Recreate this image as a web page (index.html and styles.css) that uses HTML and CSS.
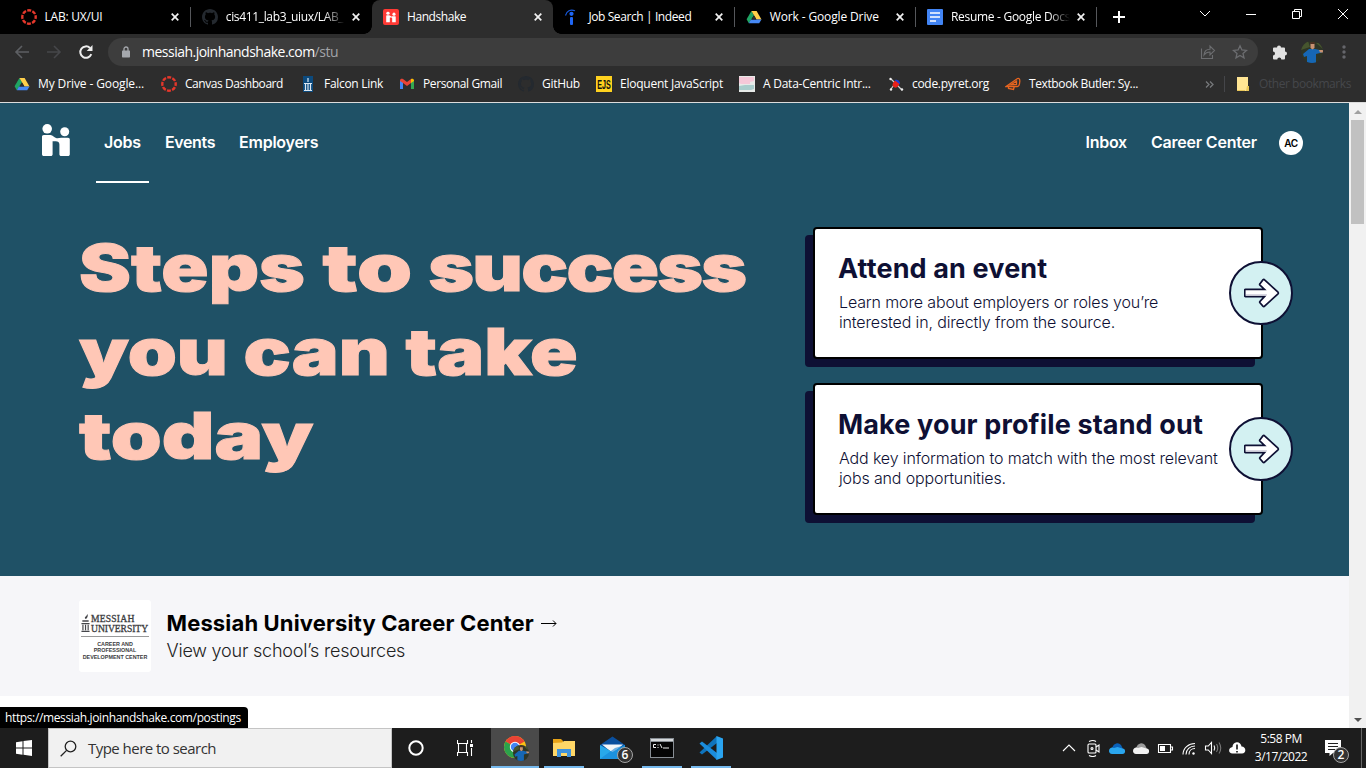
FILE: index.html
```html
<!DOCTYPE html>
<html lang="en">
<head>
<meta charset="utf-8">
<title>Handshake</title>
<link rel="stylesheet" href="styles.css">
</head>
<body>
<svg class="defs" aria-hidden="true">
  <defs>
    <clipPath id="pc"><circle cx="11" cy="11" r="11"/></clipPath>
    <symbol id="drive" viewBox="0 0 16 16"><path fill="#1fa463" d="M5.4 2 8 6.3 2.8 14.2.6 10.3z"/><path fill="#ffd04b" d="M5.4 2h5.2l4.9 8.6h-5z"/><path fill="#4688f4" d="M4.9 10.4h10.6l-2.3 3.8H2.8z"/><path fill="#2d2d2d" d="M8 6.4 10.4 10.4H5.6z"/></symbol>
    <symbol id="canvas" viewBox="0 0 16 16"><circle cx="8" cy="8" r="6.7" fill="none" stroke="#e4372b" stroke-width="2.4" stroke-dasharray="4 1.262" stroke-dashoffset="2"/></symbol>
    <symbol id="github" viewBox="0 0 16 16"><path fill="currentColor" d="M8 0C3.58 0 0 3.58 0 8c0 3.54 2.29 6.53 5.47 7.59.4.07.55-.17.55-.38 0-.19-.01-.82-.01-1.49-2.01.37-2.53-.49-2.69-.94-.09-.23-.48-.94-.82-1.13-.28-.15-.68-.52-.01-.53.63-.01 1.08.58 1.23.82.72 1.21 1.87.87 2.33.66.07-.52.28-.87.51-1.07-1.78-.2-3.64-.89-3.64-3.95 0-.87.31-1.59.82-2.15-.08-.2-.36-1.02.08-2.12 0 0 .67-.21 2.2.82.64-.18 1.32-.27 2-.27s1.36.09 2 .27c1.53-1.04 2.2-.82 2.2-.82.44 1.1.16 1.92.08 2.12.51.56.82 1.27.82 2.15 0 3.07-1.87 3.75-3.65 3.95.29.25.54.73.54 1.48 0 1.07-.01 1.93-.01 2.2 0 .21.15.46.55.38A8.01 8.01 0 0 0 16 8c0-4.42-3.58-8-8-8z"/></symbol>
    <symbol id="close" viewBox="0 0 8 8"><path d="M.7.7l6.6 6.6M7.3.7.7 7.3" fill="none" stroke="#f1f1f1" stroke-width="1.7"/></symbol>
    <symbol id="hands" viewBox="0 0 28 32"><circle cx="5.2" cy="4.8" r="4.8"/><circle cx="22.7" cy="7.7" r="4.5"/><path d="M1.800 11h6.700c2.400.3 3.700 2.700 6.200 3.200 1.400.3 3-.4 4.400-.4h6.900c1.100 0 1.800.7 1.800 1.800v14.600c0 1.100-.7 1.800-1.800 1.800h-6.800c-1.100 0-1.800-.7-1.800-1.800V20.400c0-2.200-1.400-3.200-3.600-3.200-1.300 0-2.300.2-3.200.1v12.900c0 1.100-.7 1.800-1.800 1.800H1.800C.7 32 0 31.300 0 30.200V12.800C0 11.700.7 11 1.800 11z"/></symbol>
    <symbol id="arrow" viewBox="0 0 36 30"><path d="M1.500 11.400h19l-4.500-4.300c-.5-.5-.5-.9 0-1.400l2.900-3.800c.6-.6 1.200-.6 1.700 0L34 14.200c.5.6.5 1 0 1.600L20.600 28.100c-.5.6-1.100.6-1.700 0L16 24.800c-.5-.5-.5-.9 0-1.400l4.500-4.800h-19c-.5 0-.8-.3-.8-.8v-5.600c0-.5.3-.8.8-.8z" fill="#fff" stroke="#0e1034" stroke-width="1.700"/><path d="M2 16.800h21" stroke="#d0cedd" stroke-width="1.200"/></symbol>
    <symbol id="person" viewBox="0 0 22 22"><g clip-path="url(#pc)"><path fill="#2e3526" d="M0 0h22v22H0z"/><path fill="#46552e" d="M0 0h7l2 6-9 3zM15 2h7v6z"/><path fill="#1667b4" d="M8 8h6l7 1.500v2L15 13v9H6v-7l-3 1-1-3z"/><path fill="#c89272" d="M9.500 2.500h4V7l-2 1.500L9.500 7zM18 9h4v2.500h-3z"/><path fill="#4b3023" d="M9.300 1h4.500v2H9.300z"/></g></symbol>
  </defs>
</svg>

<header class="tabs">
  <div class="tab"><svg class="fav"><use href="#canvas"/></svg><span class="label t-lab">LAB: UX/UI</span><svg class="x"><use href="#close"/></svg></div>
  <div class="tab"><svg class="fav octo"><use href="#github"/></svg><span class="label fade t-cis">cis411_lab3_uiux/LAB_</span><svg class="x"><use href="#close"/></svg></div>
  <div class="tab active"><svg class="fav" viewBox="0 0 16 16"><rect width="16" height="16" rx="2" fill="#ff3a35"/><use href="#hands" x="3" y="2.500" width="10" height="11" fill="#fff"/></svg><span class="label t-hand">Handshake</span><svg class="x"><use href="#close"/></svg></div>
  <div class="tab plain"><svg class="fav" viewBox="0 0 16 16"><path d="M1.500 6.500C2.500 2 6.500 0 11 1.800" fill="none" stroke="#1658d8" stroke-width="1.200"/><circle cx="7.500" cy="4.800" r="2.100" fill="#1f66f5"/><rect x="6" y="8" width="3" height="8" rx="1" fill="#1f66f5"/></svg><span class="label t-job">Job Search | Indeed</span><svg class="x"><use href="#close"/></svg></div>
  <div class="tab"><svg class="fav"><use href="#drive"/></svg><span class="label t-work">Work - Google Drive</span><svg class="x"><use href="#close"/></svg></div>
  <div class="tab"><svg class="fav" viewBox="0 0 16 16"><rect width="16" height="16" rx="1" fill="#4285f4"/><path d="M3 4h10M3 8h10M3 12h6" stroke="#fff" stroke-width="1.700"/></svg><span class="label fade t-res">Resume - Google Docs</span><svg class="x"><use href="#close"/></svg></div>
  <svg class="plus" viewBox="0 0 12 12"><path d="M6 0v12M0 6h12" stroke="#fff" stroke-width="2"/></svg>
  <div class="wincontrols">
    <svg viewBox="0 0 12 12"><path d="M1 3l5 5 5-5" /></svg>
    <svg viewBox="0 0 12 12"><path d="M1 6.500h10"/></svg>
    <svg viewBox="0 0 12 12"><path d="M1.500 3.500h7v7h-7zM3.500 3V1.500h7v7H9"/></svg>
    <svg viewBox="0 0 12 12"><path d="M1 1l10 10M11 1 1 11"/></svg>
  </div>
</header>

<div class="toolbar">
  <svg class="nav" viewBox="0 0 16 16"><path d="M15 8H2M8 2 2 8l6 6" fill="none" stroke="#5d5f63" stroke-width="1.600"/></svg>
  <svg class="nav" viewBox="0 0 16 16"><path d="M1 8h13M8 2l6 6-6 6" fill="none" stroke="#46474a" stroke-width="1.600"/></svg>
  <svg class="nav" viewBox="0 0 16 16"><path d="M13.300 10.200A5.700 5.700 0 1 1 12 4" fill="none" stroke="#eee" stroke-width="2"/><path d="M14.500 1v6H8.700z" fill="#eee"/></svg>
  <div class="omnibox">
    <svg class="lock" viewBox="0 0 8 12"><path d="M2 5V3a2 2 0 0 1 4 0v2" fill="none" stroke="#a5a8ad" stroke-width="1.300"/><rect y="4.500" width="8" height="7" rx=".7" fill="#a5a8ad"/></svg>
    <span class="url">messiah.joinhandshake.com<span class="path">/stu</span></span>
    <svg class="act" viewBox="0 0 16 16"><path d="M1.500 4.500v10h11V11M4 11c.3-4 3-5.800 6-5.800V2l4.500 4.500L10 11V8c-2.500 0-4.500.8-6 3z" fill="none" stroke="#6c6d70" stroke-width="1.100"/></svg>
    <svg class="act" viewBox="0 0 16 16"><path d="m8 1.800 1.900 4.200 4.600.4-3.500 3 1 4.500L8 11.500l-4 2.400 1-4.500-3.500-3 4.600-.4z" fill="none" stroke="#6c6d70" stroke-width="1.300"/></svg>
  </div>
  <svg class="ext" viewBox="0 0 16 16"><path fill="#e1e1e1" d="M1 4.500A1 1 0 0 1 2 3.500h3a2 2 0 1 1 4 0h3a1 1 0 0 1 1 1v3a2 2 0 1 1 0 4v3a1 1 0 0 1-1 1H9.300a2 2 0 0 0-4 0H2a1 1 0 0 1-1-1v-3a2 2 0 0 0 0-4z"/></svg>
  <svg class="avatar"><use href="#person"/></svg>
  <svg class="kebab" viewBox="0 0 4 14"><g fill="#65666b"><circle cx="2" cy="2" r="1.700"/><circle cx="2" cy="7" r="1.700"/><circle cx="2" cy="12" r="1.700"/></g></svg>
</div>

<nav class="bookmarks">
  <div class="bm t-drive"><svg class="fav"><use href="#drive"/></svg>My Drive - Google...</div>
  <div class="bm t-dash"><svg class="fav"><use href="#canvas"/></svg>Canvas Dashboard</div>
  <div class="bm"><svg class="fav" viewBox="0 0 16 16"><path fill="#0c4a7d" d="M3 0h10v16H3z"/><path stroke="#dbe7f2" d="M4 7.500h8M5.500 8v6M8 8v6M10.500 8v6M4 14.500h8M8 2v4" stroke-width="1.200"/></svg>Falcon Link</div>
  <div class="bm t-mail"><svg class="fav" viewBox="0 0 16 16"><path fill="#4285f4" d="M1 4v9h3V6z"/><path fill="#34a853" d="M15 4v9h-3V6z"/><path fill="#ea4335" d="M1 4.500C1 2.500 3 2.300 4 3l4 3 4-3v4l-4 3-4-3-3-2z"/><path fill="#fbbc04" d="M12 3c1-.7 3-.5 3 1.500V5l-3 2z"/></svg>Personal Gmail</div>
  <div class="bm"><svg class="fav octo"><use href="#github"/></svg>GitHub</div>
  <div class="bm t-elo"><svg class="fav" viewBox="0 0 16 16"><rect width="16" height="16" fill="#ffd21f"/><text class="ejs" x="1.200" y="12.500" textLength="13.600" lengthAdjust="spacingAndGlyphs">EJS</text></svg>Eloquent JavaScript</div>
  <div class="bm t-elo"><svg class="fav" viewBox="0 0 16 16"><path fill="#e7eae8" d="M0 0h16v16H0z"/><path fill="#f5c8d8" d="M0 1h15v4l-4 1v2H2l-2-1z"/><path fill="#a9cdcc" d="M0 10l6-1h9v4l-3 1H0z"/></svg>A Data-Centric Intr...</div>
  <div class="bm"><svg class="fav" viewBox="0 0 16 16"><path d="M3 3l11 11M6 9l-3 4" stroke="#cfcfcf" stroke-width="1.200"/><circle cx="2.500" cy="3" r="1.200" fill="#eee"/><circle cx="14" cy="13.500" r="1.200" fill="#eee"/><circle cx="3" cy="13.500" r="1.200" fill="#eee"/><ellipse cx="8" cy="8" rx="3" ry="3.800" fill="#e8201a" transform="rotate(35 8 8)"/><path d="M6.500 4A4 4 0 0 1 12 8.500z" fill="#173bd8"/></svg>code.pyret.org</div>
  <div class="bm t-mail"><svg class="fav" viewBox="0 0 16 16"><path d="M1 10.500 12.500 2.500c1.500-.5 2.500.5 2.300 3-.2 3-1.200 5-2.500 5zM3.500 11v1.500l5 1 .8-3M6 8.800l5.500-3.500v3.200z" fill="none" stroke="#e9651f" stroke-width="1.300"/></svg>Textbook Butler: Sy...</div>
  <svg class="more" viewBox="0 0 9 7"><path d="M1 .5l3 3-3 3M5 .5l3 3-3 3" fill="none" stroke="#76787b" stroke-width="1.300"/></svg>
  <div class="bm other"><svg class="fav" viewBox="0 0 16 16"><path fill="#ffe594" d="M2 1h11v9h1v5H2z"/><path fill="#e9c75a" d="M2 14h8v1H2zM12 10h2v5h-3z"/></svg>Other bookmarks</div>
</nav>

<div class="viewport">
  <main class="page">
    <section class="hero">
      <nav class="sitenav">
        <svg class="logo" fill="#fff"><use href="#hands"/></svg>
        <a class="link current">Jobs</a>
        <a class="link t-ev">Events</a>
        <a class="link">Employers</a>
        <a class="link push">Inbox</a>
        <a class="link t-cc">Career Center</a>
        <span class="initials">AC</span>
      </nav>
      <div class="herobody">
        <h1 class="headline"><span class="line l1">Steps <span class="wide-word">to</span> <span class="tight">success</span></span><span class="line l2">you can take</span><span class="line l3">today</span></h1>
        <div class="cards">
          <article class="card"><h2>Attend an event</h2><p>Learn more about employers or roles you’re<br>interested in, directly from the source.</p><span class="go"><svg><use href="#arrow"/></svg></span></article>
          <article class="card"><h2>Make your profile stand out</h2><p>Add key information to match with the most relevant<br>jobs and opportunities.</p><span class="go"><svg><use href="#arrow"/></svg></span></article>
        </div>
      </div>
    </section>
    <section class="career">
      <div class="school">
        <div class="schoolname">
          <svg class="lamp" viewBox="0 0 9 20"><path d="M4 5c-1-2 2-2.500 2.500-5 1.500 2-.5 5-1.500 5.500zM1 7h7v1.500H1zM0 10h9v1.300H0zM1 12h1.300v6H1zM3.900 12h1.300v6H3.900zM6.800 12h1.300v6H6.800zM0 18.500h9V20H0z" fill="#45464a"/></svg>
          <div><div class="m1">MESSIAH</div><div class="m2">UNIVERSITY</div></div>
        </div>
        <div class="dept">CAREER AND<br>PROFESSIONAL<br>DEVELOPMENT CENTER</div>
      </div>
      <div>
        <h3>Messiah University Career Center<svg class="thin" viewBox="0 0 16 8"><path d="M0 4.500h15M12 1.500l3 3-3 3" fill="none" stroke="#000"/></svg></h3>
        <p class="sub">View your school’s resources</p>
      </div>
    </section>
    <div class="status">https://messiah.joinhandshake.com/postings</div>
  </main>
  <aside class="scrollbar">
    <svg viewBox="0 0 8 4"><path d="M4 0l4 4H0z" fill="#a0a0a0"/></svg>
    <div class="thumb"></div>
    <svg class="down" viewBox="0 0 8 4"><path d="M0 0h8L4 4z" fill="#505050"/></svg>
  </aside>
</div>

<footer class="taskbar">
  <div class="start"><svg viewBox="0 0 16 16"><path fill="#fff" d="M0 2.200 6.500 1.300V7.500H0zM7.500 1.100 16 0v7.500H7.500zM0 8.500h6.500v6.200L0 13.800zM7.500 8.500H16V16l-8.500-1.200z"/></svg></div>
  <div class="search"><svg viewBox="0 0 17 17"><circle cx="10.500" cy="6.500" r="5.300" fill="none" stroke="#222" stroke-width="1.300"/><path d="M6.600 10.400.7 16.300" stroke="#222" stroke-width="1.300"/></svg><span>Type here to search</span></div>
  <div class="task wide"><svg width="18" height="18" viewBox="0 0 18 18"><circle cx="9" cy="9" r="6.700" fill="none" stroke="#fff" stroke-width="2"/></svg></div>
  <div class="task wide"><svg width="16" height="16" viewBox="0 0 16 16"><path d="M.5 0v3.500h10V0M.5 16v-3.500h10V16M1.500 4v8M9.500 4v8M14.500 0v3M14.500 8v8" fill="none" stroke="#fff" stroke-width="1.100"/><path fill="#fff" d="M13 4h3v3h-3z"/></svg></div>
  <div class="task open hot"><svg width="26" height="26" viewBox="0 0 26 26"><circle cx="12" cy="12" r="11" fill="#fbc116"/><path d="M12 12 2.500 6.500A11 11 0 0 1 21.500 6.500z" fill="#ea4335"/><path d="M2.500 6.500A11 11 0 0 0 12 23l5-8-5-3z" fill="#2ba24c"/><circle cx="12" cy="12" r="5.200" fill="#fff"/><circle cx="12" cy="12" r="4.200" fill="#4285f4"/><use href="#person" x="10" y="10" width="16" height="16"/></svg></div>
  <div class="task open"><svg width="22" height="18" viewBox="0 0 22 18"><path fill="#e8a317" d="M0 0h8l2 2v4H0z"/><path fill="#ffd767" d="M0 4l9-.5L11 2h11v15H0z"/><path fill="#3f93dd" d="M4 10h14v8h-4v-4H8v4H4z"/></svg></div>
  <div class="task mail"><svg width="26" height="24" viewBox="0 0 26 24"><path fill="#0a4f9e" d="M0 9 12.500.5 25 9v4H0z"/><path fill="#f4f6f9" d="M2 8.500h21l-10 9z"/><path fill="#28a8ea" d="M0 9l12.500 7L25 9v14H0z"/><path fill="#1484d6" d="M0 23 15 12l10-3v14z" opacity=".6"/></svg><span class="badge">6</span></div>
  <div class="task open"><svg width="24" height="20" viewBox="0 0 24 20"><path fill="#888e94" d="M0 0h24v20H0z"/><path fill="#d6d9db" d="M1 1h22v2H1z"/><path fill="#050505" d="M1 4h22v15H1z"/><path d="M6 6.500H3.500v3H6M8 6.500v1M8 9v1M10 6l2 4M13 10h6" fill="none" stroke="#eee"/></svg></div>
  <div class="task open"><svg width="24" height="24" viewBox="0 0 24 24"><path d="M18 0v7L3 18.500.5 16.500z" fill="#0f74bd"/><path d="M.5 7.500 3 5.500 18 17v7z" fill="#1b8ddd"/><path d="M17.500 0 24 2.500v19L17.500 24z" fill="#2aa4f0"/></svg></div>
  <div class="tray">
    <svg viewBox="0 0 18 18"><path d="M3 12l6-6 6 6"/></svg>
    <svg viewBox="0 0 18 18"><rect x="4" y="5" width="8" height="9" rx="1"/><path d="M12 8l3-2v7l-3-2M5 2.500q4-2 7 0M5 16.500q4 2 7 0"/><circle cx="8" cy="9.500" r="1"/></svg>
    <svg viewBox="0 0 18 18"><g stroke="none"><path fill="#0a61b8" d="M4.500 8a5 5 0 0 1 8.500-2l2 4-8 4H2z"/><path fill="#2aa6ee" d="M1 12c0-3 3-4.500 5-3l3.500-1 5 1.500C18 9.500 18 15 14.500 15H4c-2 0-3-1.500-3-3z"/></g></svg>
    <svg viewBox="0 0 18 18"><g stroke="none"><path fill="#9d9d9d" d="M4.500 8a5 5 0 0 1 8.500-2l2 4-8 4H2z"/><path fill="#f2f2f2" d="M1 12c0-3 3-4.500 5-3l3.500-1 5 1.500C18 9.500 18 15 14.500 15H4c-2 0-3-1.500-3-3z"/></g></svg>
    <svg viewBox="0 0 18 18"><path d="M2.500 5.500h12v8h-12zM15 8h1.500v3H15"/><path fill="#fff" stroke="none" d="M4 7h5v5H4z"/></svg>
    <svg viewBox="0 0 18 18"><path d="M3 15.500C3 9 8.500 4.500 15 4.500M6 15.500c0-5 4-8.500 9-8.500M9 15.500c0-3.500 2.500-6 6-6"/><circle cx="13.500" cy="14.500" r="1.200" fill="#fff" stroke="none"/></svg>
    <svg viewBox="0 0 18 18"><path d="M1.500 7h2.800L7.500 3.500v11L4.300 11H1.500zM10 6.500q1.500 2.500 0 5"/><path d="M12.500 5q2.500 4 0 8M15 3.500q3.500 5.500 0 11" stroke="#777"/></svg>
    <svg viewBox="0 0 18 18"><path fill="#fff" stroke="none" d="M4.500 8a4.500 4.500 0 0 1 9-.5c5 0 5 7 .5 7H4.500c-4.500 0-4.500-6 0-6.500z"/><path stroke="#222" stroke-width="1.700" d="M9 5.500v5M9 12v1.500"/></svg>
  </div>
  <div class="clock"><div>5:58 PM</div><div>3/17/2022</div></div>
  <div class="notes"><svg viewBox="0 0 16 16"><path fill="#fff" d="M0 0h16v13H8l-3.500 3v-3H0z"/><path d="M3 3.500h10M3 6.500h10M3 9.500h7" stroke="#222"/></svg><span class="badge">2</span></div>
  <div class="peek"></div>
</footer>
</body>
</html>
```
FILE: styles.css
```css
* { box-sizing: border-box; }
body { margin: 0; width: 1366px; height: 768px; overflow: hidden; display: flex; flex-direction: column; font-family: "Open Sans", "Noto Sans", sans-serif; font-size: 12px; color: #fff; background: #2d2d2d; }
svg { display: block; flex: none; }
h1, h2, h3, p { margin: 0; }
.defs { position: absolute; width: 0; height: 0; }
.fav { width: 16px; height: 16px; margin-right: 8px; }
.octo { color: #24292f; }

/* Tab strip */
.tabs { display: flex; height: 34px; flex: none; background: #000; padding-left: 9.5px; align-items: stretch; }
.tab { width: 181.3px; display: flex; align-items: center; padding: 0 11px; flex: none; background: linear-gradient(#55575b, #55575b) right center / 1px 20px no-repeat; }
.tab:nth-child(2) { background: none; }
.tab.active { background: #2d2d2d; border-radius: 8px 8px 0 0; position: relative; }
.tab.active::before, .tab.active::after { content: ""; position: absolute; bottom: 0; width: 8px; height: 8px; }
.tab.active::before { left: -8px; background: radial-gradient(circle at 0 0, #000 7.5px, #2d2d2d 8px); }
.tab.active::after { right: -8px; background: radial-gradient(circle at 100% 0, #000 7.5px, #2d2d2d 8px); }
.label { width: 119px; white-space: nowrap; flex: none; line-height: 18px; }
.fade { -webkit-mask: linear-gradient(90deg, #000 82%, transparent); mask: linear-gradient(90deg, #000 82%, transparent); }
.x { width: 8px; height: 8px; margin-left: 7.5px; }
.t-lab { letter-spacing: -.21px; }
.t-cis { letter-spacing: -.35px; }
.t-res { letter-spacing: -.3px; }
.t-hand { letter-spacing: -.45px; }
.t-job { letter-spacing: -.4px; }
.t-work { letter-spacing: -.13px; }
.plus { width: 12px; height: 12px; margin: 11px 0 0 15.5px; }
.wincontrols { display: flex; gap: 34px; margin: 8px 17px 0 auto; }
.wincontrols svg { width: 12px; height: 12px; fill: none; stroke: #fff; }

/* Toolbar */
.toolbar { display: flex; height: 36px; flex: none; align-items: center; padding-left: 14px; }
.nav { width: 16px; height: 16px; margin-right: 16px; }
.omnibox { width: 1150px; height: 28px; margin-left: -2px; border-radius: 14px; background: #3d3d3d; display: flex; align-items: center; padding: 0 10px 0 14px; }
.lock { width: 8px; height: 12px; }
.url { font-size: 14px; letter-spacing: -.51px; margin: 0 auto 0 12px; line-height: 20px; }
.path { color: #a2a4a8; }
.act { width: 16px; height: 16px; margin-left: 16px; }
.ext { width: 16px; height: 16px; margin-left: 14px; }
.avatar { width: 22px; height: 22px; margin-left: 13px; }
.kebab { width: 4px; height: 14px; margin-left: 19px; }

/* Bookmarks bar */
.bookmarks { height: 32px; flex: none; display: grid; grid-template-columns: 147px 139px 99px 119px 78px 143px 149px 117px 200px 20px 1fr; padding-left: 14px; align-items: center; padding-bottom: 4px; }
.bm { display: flex; align-items: center; white-space: nowrap; letter-spacing: -.3px; line-height: 16px; }
.t-drive { letter-spacing: -.11px; }
.t-dash { letter-spacing: -.44px; }
.t-mail { letter-spacing: -.39px; }
.t-elo { letter-spacing: -.24px; }
.ejs { font: bold 12px "Liberation Sans", sans-serif; fill: #111; letter-spacing: 0; }
.more { width: 9px; height: 7px; }
.other { border-left: 1px solid #45464a; padding-left: 10px; letter-spacing: -.44px; color: #45474b; margin-left: -1px; }

/* Page */
.viewport { flex: 1; display: flex; border-top: 1px solid #dcdcdc; min-height: 0; }
.page { width: 1349px; background: #fff; position: relative; font-family: Inter, "Liberation Sans", sans-serif; }
.hero { height: 473px; background: #1f5166; }
.sitenav { display: flex; height: 80px; align-items: center; padding: 0 46px 0 42px; font-size: 16px; font-weight: 600; letter-spacing: -.25px; }
.logo { width: 28px; height: 32px; margin: -6px 26px 0 0; }
.link { height: 80px; line-height: 79px; padding: 0 8px; margin-right: 8px; }
.link.current { border-bottom: 2px solid #fff; width: 53px; }
.push { margin-left: auto; }
.t-ev { letter-spacing: -.38px; }
.t-cc { margin-right: 14px; letter-spacing: -.2px; }
.initials { width: 24px; height: 24px; border-radius: 50%; background: #fff; color: #000; font-size: 10px; line-height: 24px; text-align: center; }
.herobody { display: flex; justify-content: space-between; padding: 44px 86px 0 79px; }
.headline { margin-top: -1px; color: #ffc7b6; font-size: 65px; font-weight: 900; line-height: 84px; -webkit-text-stroke: 1px #ffc7b6; }
.line { display: block; width: max-content; transform-origin: 0 50%; }
.l1 { transform: scaleX(1.2); }
.l2 { transform: scaleX(1.21); }
.l3 { transform: scaleX(1.255); }
.wide-word { display: inline-block; transform: scaleX(1.13); transform-origin: 0 50%; margin: 0 9px 0 2px; }
.tight { letter-spacing: -1.5px; }
.cards { width: 450px; display: flex; flex-direction: column; gap: 24px; flex: none; }
.card { position: relative; height: 132px; background: #fff; border: 2px solid #000; border-radius: 4px; box-shadow: -8px 8px #0e1034; padding: 23px 24px; color: #0e1034; white-space: nowrap; }
.card h2 { font-size: 27px; font-weight: 700; line-height: 34px; letter-spacing: .14px; margin-left: -1px; }
.card p { font-size: 16px; font-weight: 300; line-height: 20px; letter-spacing: -.14px; margin-top: 6px; }
.go { position: absolute; right: -32px; top: 32px; width: 64px; height: 64px; border-radius: 50%; background: #d3f1f2; border: 2px solid #0e1034; display: grid; place-items: center; }
.go svg { width: 36px; height: 30px; margin-left: 2px; }
.career { height: 120px; background: #f6f6f9; display: flex; gap: 15.5px; padding: 24px 79px; color: #000; }
.school { width: 72px; height: 72px; background: #fff; border-radius: 3px; padding: 14px 2px 0; color: #3b3c40; }
.schoolname { display: flex; font: 9.6px/9.5px "Liberation Serif", serif; gap: 1px; border-bottom: 1px solid #999; height: 23px; -webkit-text-stroke: .3px #3b3c40; }
.lamp { width: 9px; height: 18px; }
.m1 { letter-spacing: .2px; }
.m2 { letter-spacing: -.05px; }
.dept { font: bold 5.4px/6.3px "Liberation Sans", sans-serif; text-align: center; white-space: nowrap; margin-top: 4px; }
.career h3 { display: flex; align-items: center; font-size: 22px; font-weight: 700; line-height: 28px; letter-spacing: .15px; padding-top: 9px; }
.thin { width: 16px; height: 8px; margin-left: 7px; }
.sub { font-size: 18px; font-weight: 300; line-height: 28px; letter-spacing: -.21px; color: #222; }
.status { position: absolute; left: 0; bottom: 0; width: 248px; height: 21px; background: #000; border-top-right-radius: 4px; color: #fff; font: 12px/21px "Open Sans", sans-serif; letter-spacing: -.37px; padding-left: 5px; }
.scrollbar { width: 17px; background: #f1f1f1; display: flex; flex-direction: column; align-items: center; padding: 7px 0 6px; }
.scrollbar svg { width: 8px; height: 4px; }
.thumb { width: 13px; height: 104px; background: #c1c1c1; margin-top: 6px; }
.scrollbar .down { margin-top: auto; }

/* Taskbar */
.taskbar { height: 40px; flex: none; display: flex; background: #1d1d1d; }
.start { width: 48px; display: grid; place-items: center; }
.start svg { width: 16px; height: 16px; }
.search { width: 344px; background: #f1f1f1; border: 1px solid #c4c4c4; display: flex; align-items: center; gap: 11px; padding-left: 11px; color: #333; font-size: 15px; letter-spacing: -.53px; }
.search svg { width: 17px; height: 17px; }
.task { width: 49px; display: grid; place-items: center; position: relative; padding-right: 2px; }
.task.wide { width: 49.5px; padding-right: 2px; }
.open::after { content: ""; position: absolute; left: 4px; right: 5px; bottom: 0; height: 2px; background: #76b9ed; }
.hot { background: linear-gradient(#4a4a4a, #4a4a4a) 0 0 / 48px 100% no-repeat; padding-right: 0; }
.hot::after { left: 0; right: 1px; }
.badge { position: absolute; width: 16px; height: 16px; border-radius: 50%; border: 1px solid #a5a5a5; background: #333; font-size: 12px; font-weight: 600; line-height: 14px; text-align: center; }
.mail .badge { left: 28px; top: 19px; }
.tray { display: flex; margin-left: auto; gap: 6px; align-items: center; }
.tray svg { width: 18px; height: 18px; fill: none; stroke: #fff; stroke-width: 1.1; }
.clock { width: 68px; padding-top: 2px; text-align: center; line-height: 18px; letter-spacing: -.5px; margin-left: 1px; }
.notes { width: 46px; position: relative; padding: 12px 0 0 10px; }
.notes svg { width: 16px; height: 16px; }
.notes .badge { left: 18px; top: 19px; }
.peek { width: 5px; border-left: 1px solid #666; }
```
